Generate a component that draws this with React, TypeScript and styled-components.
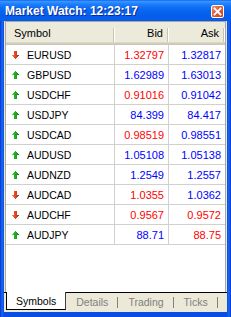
import React from 'react';
import styled, { createGlobalStyle } from 'styled-components';

const GlobalStyle = createGlobalStyle`
  html, body { margin: 0; padding: 0; background: #ffffff; }
  body { font-family: "Liberation Sans", Arial, sans-serif; }
  * { box-sizing: border-box; }
`;

const Window = styled.div`
  width: 231px;
  height: 317px;
  display: flex;
  flex-direction: column;
  background: #0a4de3;
  overflow: hidden;
`;

const TitleBar = styled.div`
  height: 21px;
  flex: none;
  display: flex;
  align-items: center;
  justify-content: space-between;
  padding: 0 7px 0 5px;
  background: linear-gradient(
    to bottom,
    #0a5ef0 0%,
    #3d95ff 6%,
    #2b8cff 12%,
    #1a7dfc 22%,
    #0f6ef5 36%,
    #0865ee 52%,
    #055fe9 70%,
    #055de8 82%,
    #0660ee 92%,
    #0558e0 100%
  );
`;

const Title = styled.span`
  color: #ffffff;
  font-weight: bold;
  font-size: 12px;
  line-height: 14px;
  text-shadow: 1px 1px 0 #0a2a9a;
  white-space: nowrap;
`;

const CloseButton = styled.div`
  width: 13px;
  height: 13px;
  border: 1px solid #ffffff;
  border-radius: 2px;
  background: linear-gradient(135deg, #f09276 0%, #e2613d 40%, #cc4421 100%);
  display: flex;
  align-items: center;
  justify-content: center;
  margin-top: 1px;
`;

const Frame = styled.div`
  flex: 1;
  min-height: 0;
  display: flex;
  padding: 0 4px 5px 4px;
  background: linear-gradient(to right, #0831d9 0, #166aee 2px, #0a4de3 4px, #0a4de3 227px, #166aee 229px, #0831d9 231px);
`;

const Panel = styled.div`
  flex: 1;
  min-width: 0;
  display: flex;
  flex-direction: column;
  background: #ece9d8;
  padding: 0 1px;
`;

const List = styled.div`
  flex: 1;
  display: flex;
  flex-direction: column;
  background: #ffffff;
  border: 1px solid #a7a6aa;
  border-bottom: none;
`;

const columns = '109px 54px 1fr';

const HeaderRow = styled.div`
  display: grid;
  grid-template-columns: ${columns};
  height: 23px;
  flex: none;
  background: linear-gradient(
    to bottom,
    #ebeadb 0,
    #ebeadb 20px,
    #e2decd 20px,
    #d6d2c2 21px,
    #cbc7b8 22px,
    #cbc7b8 23px
  );
`;

const HeaderCell = styled.div<{ $right?: boolean }>`
  display: flex;
  align-items: center;
  justify-content: ${(p) => (p.$right ? 'flex-end' : 'flex-start')};
  padding: ${(p) => (p.$right ? '0 6px 1px 0' : '0 0 1px 8px')};
  font-size: 11px;
  color: #000000;
  background:
    linear-gradient(#c7c5b2, #c7c5b2) right 1px top 6px / 1px 14px no-repeat,
    linear-gradient(#ffffff, #ffffff) right 0 top 6px / 1px 14px no-repeat;
`;

const Row = styled.div`
  display: grid;
  grid-template-columns: ${columns};
  height: 20px;
  flex: none;
`;

const Cell = styled.div<{ $last?: boolean }>`
  display: flex;
  align-items: center;
  border-bottom: 1px solid #d0d0cc;
  border-right: ${(p) => (p.$last ? 'none' : '1px solid #d0d0cc')};
`;

const SymbolCell = styled(Cell)`
  padding-left: 6px;
  gap: 8px;
  font-size: 10.5px;
  color: #000000;
`;

const PriceCell = styled(Cell)<{ $up: boolean }>`
  justify-content: flex-end;
  padding-right: 4px;
  font-size: 11px;
  color: ${(p) => (p.$up ? '#0000ff' : '#ff0000')};
`;

const TabStrip = styled.div`
  height: 20px;
  flex: none;
  display: flex;
  align-items: flex-start;
  padding-left: 2px;
  border-top: 1px solid #000000;
  margin-left: -1px;
  margin-right: -1px;
`;

const Tab = styled.div<{ $active?: boolean }>`
  height: ${(p) => (p.$active ? '18px' : '17px')};
  margin-top: ${(p) => (p.$active ? '-1px' : '0')};
  display: flex;
  align-items: center;
  padding: ${(p) => (p.$active ? '1px 9px 0' : '1px 10px 0')};
  font-size: 10.5px;
  white-space: nowrap;
  color: ${(p) => (p.$active ? '#000000' : '#7f7f7f')};
  background: ${(p) =>
    p.$active
      ? '#ffffff'
      : 'linear-gradient(#808080, #808080) right 0 top 4px / 1px 11px no-repeat'};
  border-left: ${(p) => (p.$active ? '1px solid #000000' : 'none')};
  border-right: ${(p) => (p.$active ? '1px solid #404040' : 'none')};
  border-bottom: ${(p) => (p.$active ? '1px solid #000000' : 'none')};
`;

const Arrow = ({ up }: { up: boolean }) => {
  const id = up ? 'gUp' : 'gDown';
  return (
    <svg width="7" height="8" viewBox="0 0 7 8" shapeRendering="crispEdges" style={{ flex: 'none' }}>
      <defs>
        <linearGradient id={id} x1="0" y1="0" x2="1" y2="0">
          {up ? (
            <>
              <stop offset="0" stopColor="#6fd860" />
              <stop offset="0.4" stopColor="#22b022" />
              <stop offset="1" stopColor="#128018" />
            </>
          ) : (
            <>
              <stop offset="0" stopColor="#f69070" />
              <stop offset="0.4" stopColor="#e84a26" />
              <stop offset="1" stopColor="#b02a10" />
            </>
          )}
        </linearGradient>
      </defs>
      <path
        d={
          up
            ? 'M3 0h1v1h1v1h1v1h1v1h-2v4h-3v-4h-2v-1h1v-1h1v-1h1z'
            : 'M2 0h3v4h2v1h-1v1h-1v1h-1v1h-1v-1h-1v-1h-1v-1h-1v-1h2z'
        }
        fill={`url(#${id})`}
      />
    </svg>
  );
};

type Quote = { sym: string; up: boolean; bid: string; bidUp: boolean; ask: string; askUp: boolean };

const quotes: Quote[] = [
  { sym: 'EURUSD', up: false, bid: '1.32797', bidUp: false, ask: '1.32817', askUp: true },
  { sym: 'GBPUSD', up: true, bid: '1.62989', bidUp: true, ask: '1.63013', askUp: true },
  { sym: 'USDCHF', up: true, bid: '0.91016', bidUp: false, ask: '0.91042', askUp: true },
  { sym: 'USDJPY', up: true, bid: '84.399', bidUp: true, ask: '84.417', askUp: true },
  { sym: 'USDCAD', up: true, bid: '0.98519', bidUp: false, ask: '0.98551', askUp: true },
  { sym: 'AUDUSD', up: true, bid: '1.05108', bidUp: true, ask: '1.05138', askUp: true },
  { sym: 'AUDNZD', up: true, bid: '1.2549', bidUp: true, ask: '1.2557', askUp: true },
  { sym: 'AUDCAD', up: false, bid: '1.0355', bidUp: false, ask: '1.0362', askUp: true },
  { sym: 'AUDCHF', up: false, bid: '0.9567', bidUp: false, ask: '0.9572', askUp: false },
  { sym: 'AUDJPY', up: true, bid: '88.71', bidUp: true, ask: '88.75', askUp: false },
];

export default function App() {
  return (
    <>
      <GlobalStyle />
      <Window>
        <TitleBar>
          <Title>Market Watch: 12:23:17</Title>
          <CloseButton>
            <svg width="9" height="9" viewBox="0 0 9 9">
              <path d="M1.5 1.5L7.5 7.5M7.5 1.5L1.5 7.5" stroke="#ffffff" strokeWidth="1.8" strokeLinecap="square" />
            </svg>
          </CloseButton>
        </TitleBar>
        <Frame>
          <Panel>
            <List>
              <HeaderRow>
                <HeaderCell>Symbol</HeaderCell>
                <HeaderCell $right>Bid</HeaderCell>
                <HeaderCell $right>Ask</HeaderCell>
              </HeaderRow>
              {quotes.map((q) => (
                <Row key={q.sym}>
                  <SymbolCell>
                    <Arrow up={q.up} />
                    <span>{q.sym}</span>
                  </SymbolCell>
                  <PriceCell $up={q.bidUp}>{q.bid}</PriceCell>
                  <PriceCell $up={q.askUp} $last>{q.ask}</PriceCell>
                </Row>
              ))}
            </List>
            <TabStrip>
              <Tab $active>Symbols</Tab>
              <Tab>Details</Tab>
              <Tab>Trading</Tab>
              <Tab>Ticks</Tab>
            </TabStrip>
          </Panel>
        </Frame>
      </Window>
    </>
  );
}
